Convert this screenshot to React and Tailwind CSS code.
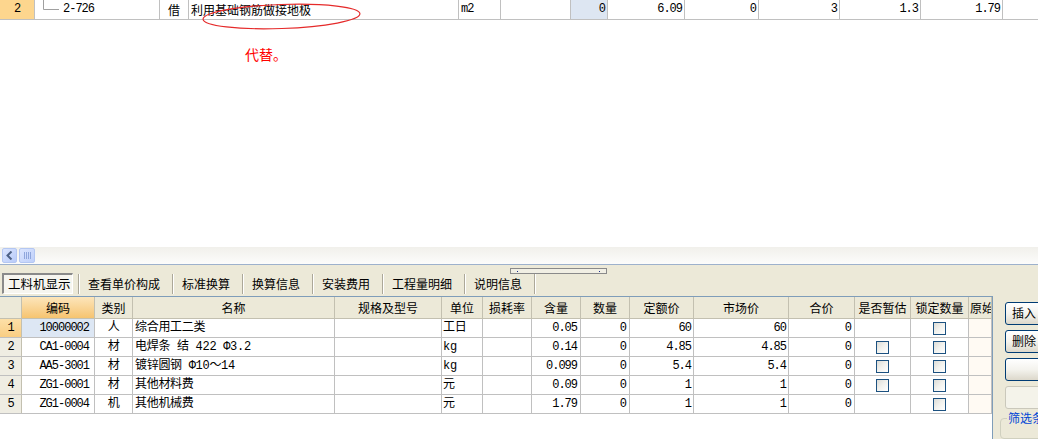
import React from 'react';

const CN = "font-['Noto_Sans_CJK_SC','Noto_Sans',sans-serif]";
const MONO = "font-['Liberation_Mono','Noto_Sans_CJK_SC',monospace]";

const topCells = [
  { w: 125 },
  { w: 29, text: '借', align: 'text-center', cn: true },
  { w: 270, text: '利用基础钢筋做接地极', align: 'text-left pl-[2px]', cn: true },
  { w: 42, text: 'm2', align: 'text-left pl-[2px]' },
  { w: 70, text: '' },
  { w: 37, text: '0', align: 'text-right pr-[2px]', bg: 'bg-[#dde6f2]' },
  { w: 77, text: '6.09', align: 'text-right pr-[2px]' },
  { w: 74, text: '0', align: 'text-right pr-[2px]' },
  { w: 81, text: '3', align: 'text-right pr-[2px]' },
  { w: 81, text: '1.3', align: 'text-right pr-[2px]' },
  { w: 82, text: '1.79', align: 'text-right pr-[2px]' },
];

const cols = [
  { w: 22, title: '' },
  { w: 73, title: '编码', align: 'text-right pr-[5px]', num: true },
  { w: 38, title: '类别', align: 'text-center' },
  { w: 202, title: '名称', align: 'text-left pl-[2px]' },
  { w: 107, title: '规格及型号', align: 'text-left' },
  { w: 41, title: '单位', align: 'text-left pl-[1px]' },
  { w: 49, title: '损耗率', align: 'text-right' },
  { w: 49, title: '含量', align: 'text-right pr-[3px]', num: true },
  { w: 49, title: '数量', align: 'text-right pr-[3px]', num: true },
  { w: 64, title: '定额价', align: 'text-right pr-[2px]', num: true },
  { w: 95, title: '市场价', align: 'text-right pr-[2px]', num: true },
  { w: 66, title: '合价', align: 'text-right pr-[3px]', num: true },
  { w: 56, title: '是否暂估' },
  { w: 58, title: '锁定数量' },
  { w: 23, title: '原始' },
];

const rows = [
  ['1', '10000002', '人', '综合用工二类', '', '工日', '', '0.05', '0', '60', '60', '0', false, true],
  ['2', 'CA1-0004', '材', '电焊条 结 422 Φ3.2', '', 'kg', '', '0.14', '0', '4.85', '4.85', '0', true, true],
  ['3', 'AA5-3001', '材', '镀锌圆钢 Φ10～14', '', 'kg', '', '0.099', '0', '5.4', '5.4', '0', true, true],
  ['4', 'ZG1-0001', '材', '其他材料费', '', '元', '', '0.09', '0', '1', '1', '0', true, true],
  ['5', 'ZG1-0004', '机', '其他机械费', '', '元', '', '1.79', '0', '1', '1', '0', false, true],
];

const tabs = ['查看单价构成', '标准换算', '换算信息', '安装费用', '工程量明细', '说明信息'];

function Checkbox() {
  return (
    <div className="w-[13px] h-[13px] border border-[#1c5180] bg-gradient-to-br from-[#dcdcd7] via-[#f2f2ee] to-white" />
  );
}

function TopRow() {
  return (
    <div className={`flex h-[20px] border-b border-[#c0c0c0] text-[12px] leading-[19px] text-black ${MONO}`}>
      <div className="w-[35px] shrink-0 bg-[#fdd68e] border-r border-[#c0c0c0] text-center tracking-[-1px]">2</div>
      <div className="w-[125px] shrink-0 border-r border-[#c0c0c0] flex items-start pl-[8px]">
        <svg width="16" height="19" viewBox="0 0 16 19" className="shrink-0">
          <path d="M0.5 0 V9.5 H16" fill="none" stroke="#a0a0a0" strokeWidth="1" />
        </svg>
        <span className="ml-[4px] tracking-[-1px]">2-726</span>
      </div>
      {topCells.slice(1).map((c, i) => (
        <div
          key={i}
          style={{ width: c.w }}
          className={`shrink-0 border-r border-[#c0c0c0] whitespace-nowrap overflow-hidden ${c.align || ''} ${c.bg || ''} ${c.cn ? CN + ' leading-[19px]' : 'tracking-[-1px]'}`}
        >
          {c.text}
        </div>
      ))}
      <div className="flex-1" />
    </div>
  );
}

function Scrollbar() {
  return (
    <div className="h-[17px] flex items-center gap-[2px] pl-[2px] bg-gradient-to-b from-[#f1f0eb] to-[#fcfcfb]">
      <div className="w-[15px] h-[15px] rounded-[2px] border border-[#b4c7f2] bg-gradient-to-br from-[#dbe5fe] to-[#b8cbf9] flex items-center justify-center">
        <svg width="7" height="9" viewBox="0 0 7 9">
          <path d="M5.5 0.5 L1.5 4.5 L5.5 8.5" fill="none" stroke="#4d6185" strokeWidth="2" />
        </svg>
      </div>
      <div className="w-[16px] h-[15px] rounded-[2px] border border-[#b4c7f2] bg-gradient-to-br from-[#dbe5fe] to-[#bfd0fa] flex items-center justify-center gap-[1px]">
        <div className="w-[1px] h-[7px] bg-[#8fa6dc]" />
        <div className="w-[1px] h-[7px] bg-[#8fa6dc]" />
        <div className="w-[1px] h-[7px] bg-[#8fa6dc]" />
        <div className="w-[1px] h-[7px] bg-[#8fa6dc]" />
      </div>
    </div>
  );
}

function TabBar() {
  return (
    <div className={`h-[32px] bg-[#ece9d8] border-t border-[#9db1cc] flex flex-col ${CN}`}>
      <div className="h-[8px] pt-[3px] pl-[510px]">
        <div className="w-[97px] h-[6px] border border-[#8a8a8a] bg-[#f1efe4] flex items-center justify-between px-[6px]">
          <div className="w-[1px] h-[1px] bg-[#1a2a8a]" />
          <div className="w-[1px] h-[1px] bg-[#1a2a8a]" />
        </div>
      </div>
      <div className="h-[23px] flex items-start text-[12px] text-black">
        <div className="ml-[2px] w-[71px] h-[21px] border-t-2 border-l-2 border-b border-r border-t-[#8a8a8a] border-l-[#8a8a8a] border-b-white border-r-white bg-[#f6f5ef] flex items-center pl-[4px] leading-[16px] text-[12.5px]">
          工料机显示
        </div>
        <div className="ml-[5px] mt-[1px] w-[2px] h-[20px] border-l border-[#aca899] bg-white" />
        {tabs.map((t) => (
          <React.Fragment key={t}>
            <div className="pl-[8px] pr-[12px] h-[21px] flex items-center leading-[16px] whitespace-nowrap">{t}</div>
            <div className="mt-[1px] w-[2px] h-[20px] border-l border-[#aca899] bg-white" />
          </React.Fragment>
        ))}
      </div>
    </div>
  );
}

function Grid() {
  return (
    <div className="w-[993px] shrink-0 h-full border-t border-r border-[#7f9db9] bg-white text-[12px] text-black">
      <div className={`flex h-[22px] bg-[#ece9d8] border-b border-[#c3c0b0] ${CN}`}>
        {cols.map((c, i) => (
          <div
            key={i}
            style={{ width: c.w }}
            className={`shrink-0 h-full border-r border-[#c3c0b0] flex items-center overflow-hidden whitespace-nowrap leading-[16px] ${
              i === 1 ? 'bg-gradient-to-b from-[#fce5ba] to-[#f6c46f] justify-center' : i === 14 ? 'pl-[1px]' : 'justify-center'
            }`}
          >
            {c.title}
          </div>
        ))}
      </div>
      {rows.map((r, ri) => (
        <div key={ri} className={`flex h-[19px] border-b border-[#c0c0c0] ${MONO}`}>
          {cols.map((c, ci) => {
            const content = r[ci];
            let cls = c.align || '';
            let bg = '';
            if (ci === 0) {
              cls = 'text-center tracking-[-1px]';
              bg = ri === 0 ? 'bg-gradient-to-b from-[#fde0a8] to-[#f9cd82] border-[#c3c0b0]' : 'bg-[#efede3] border-[#c3c0b0]';
            }
            if (ci === 1 && ri === 0) bg = 'bg-[#dde7f4]';
            if (ci === 14) bg = 'bg-[#fffaf3]';
            if (ci === 12 || ci === 13) {
              return (
                <div key={ci} style={{ width: c.w }} className="shrink-0 h-full border-r border-[#c0c0c0] flex items-center justify-center">
                  {content ? <Checkbox /> : null}
                </div>
              );
            }
            const isCn = ci === 2 || ci === 3 || ci === 5;
            return (
              <div
                key={ci}
                style={{ width: c.w }}
                className={`shrink-0 h-full border-r border-[#c0c0c0] overflow-hidden whitespace-nowrap leading-[18px] ${cls} ${bg} ${c.num ? 'tracking-[-1px]' : ''} ${isCn ? 'tracking-[-0.3px]' : ''}`}
              >
                {content}
              </div>
            );
          })}
        </div>
      ))}
    </div>
  );
}

function SidePanel() {
  const btn = 'w-[64px] h-[23px] shrink-0 rounded-[3px] border border-[#003c74] bg-gradient-to-b from-white via-[#f4f3ee] to-[#dcd8cb] text-[12px] text-black text-left pl-[6px] leading-[20px] whitespace-nowrap overflow-hidden';
  return (
    <div className={`flex-1 h-full bg-[#ece9d8] overflow-hidden pl-[12px] pt-[6px] flex flex-col gap-[5px] ${CN}`}>
      <div className={btn}>插入</div>
      <div className={btn}>删除</div>
      <div className={btn}></div>
      <div className="w-[64px] h-[23px] shrink-0 rounded-[3px] border border-[#cac8bb] bg-[#f4f3ea]" />
      <fieldset className="-ml-[5px] w-[60px] h-[40px] border border-[#d0d0bf] rounded-[4px] pl-[6px] -mt-[3px]">
        <legend className="text-[12px] text-[#0046d5] whitespace-nowrap px-[1px] leading-[14px]">筛选条件</legend>
      </fieldset>
    </div>
  );
}

export default function App() {
  return (
    <div className="w-[1038px] h-[439px] overflow-hidden bg-white flex flex-col">
      <div className="relative h-[247px] shrink-0">
        <TopRow />
        <div className={`pl-[245px] pt-[26px] text-[14px] leading-[17px] text-[#ff0000] ${CN}`}>代替。</div>
        <svg className="absolute left-0 top-0 pointer-events-none" width="400" height="40" viewBox="0 0 400 40">
          <ellipse cx="281.5" cy="16.5" rx="78.5" ry="12" transform="rotate(-2 281.5 16.5)" fill="none" stroke="#e52a2a" strokeWidth="1.2" />
        </svg>
      </div>
      <Scrollbar />
      <TabBar />
      <div className="flex h-[143px] shrink-0">
        <Grid />
        <SidePanel />
      </div>
    </div>
  );
}
